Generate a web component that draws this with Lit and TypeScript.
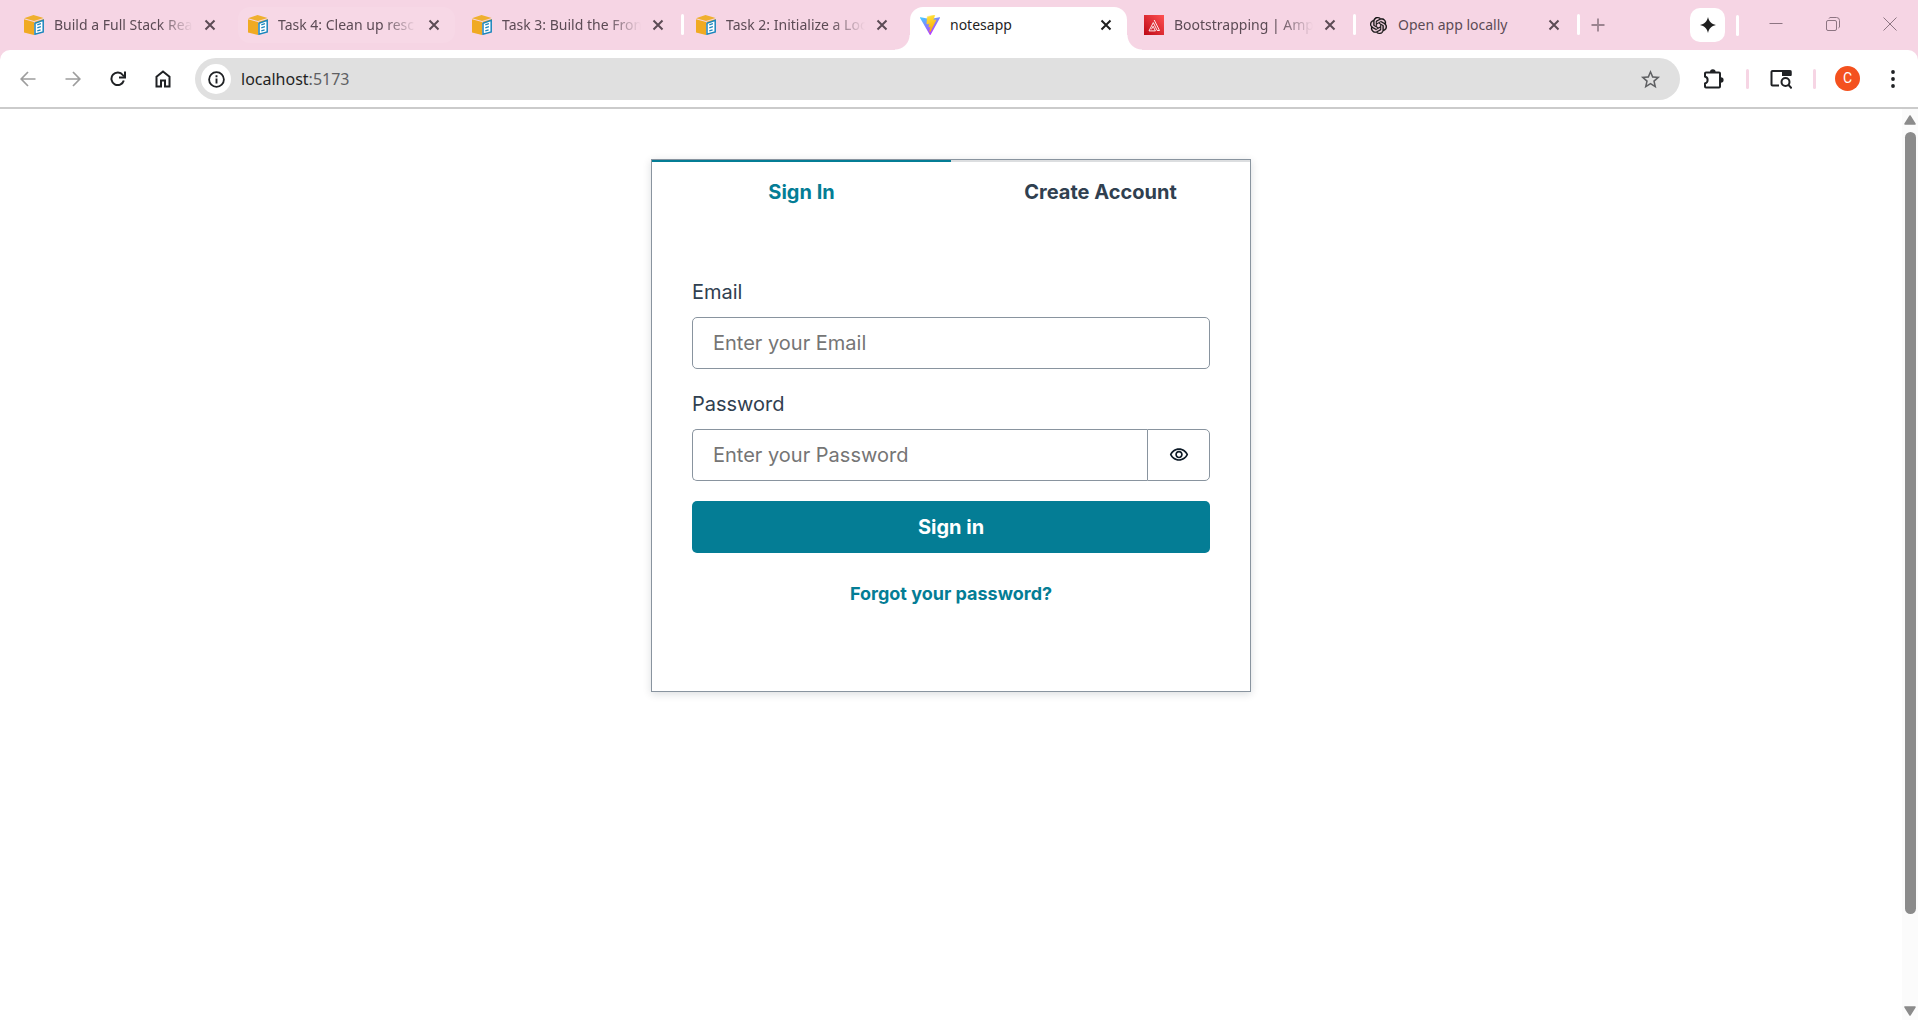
import { LitElement, html, css, svg } from "lit";
import { customElement, property, state } from "lit/decorators.js";
import { classMap } from "lit/directives/class-map.js";

const bookIcon = svg`<svg viewBox="0 0 20 20" width="20" height="20" aria-hidden="true">
  <path d="M0 3.2 9.500 0 19.600 3 10 6z" fill="#efb02f"/>
  <path d="M0 4.200 10 7v13L0 17.600z" fill="#f0aa22"/>
  <path d="M10.600 6.800 20 3.900v3L10.600 10z" fill="#efb02f"/>
  <path d="M11 8.200 19.200 5.400v11.600L11 19.200z" fill="#fff" stroke="#1c86bd" stroke-width="1.500"/>
  <path d="M13.300 9.900l3.600-1.200M13.300 12.800l3.600-1.100M13.300 15.900l3.300-1" stroke="#1c86bd" stroke-width="1.300" fill="none"/>
</svg>`;

const viteIcon = svg`<svg viewBox="0 0 32 32" width="20" height="20" aria-hidden="true">
  <defs>
    <linearGradient id="va" x1="0" y1="0" x2="0.6" y2="1"><stop offset="0" stop-color="#41d1ff"/><stop offset="1" stop-color="#bd34fe"/></linearGradient>
    <linearGradient id="vb" x1="0.4" y1="0" x2="0.6" y2="1"><stop offset="0" stop-color="#ffea83"/><stop offset="0.1" stop-color="#ffdd35"/><stop offset="1" stop-color="#ffa800"/></linearGradient>
  </defs>
  <path fill="url(#va)" d="M31.9 4.7 17 31.4a.8.8 0 0 1-1.4 0L.1 4.7A.8.8 0 0 1 1 3.500l15 2.700h.3l14.700-2.700a.8.8 0 0 1 .9 1.200z"/>
  <path fill="url(#vb)" stroke="url(#vb)" stroke-width="0.800" d="M23 .1 11.900 2.300a.4.4 0 0 0-.3.400l-.7 11.400a.4.4 0 0 0 .5.400l3.100-.7a.4.4 0 0 1 .5.500l-.9 4.500a.4.4 0 0 0 .5.500l1.900-.6a.4.4 0 0 1 .5.500l-1.500 7.100c-.1.400.5.700.8.300l.2-.3 9.100-18.100a.4.4 0 0 0-.5-.6l-3.200.6a.4.4 0 0 1-.5-.5L23.500.6A.4.4 0 0 0 23 .1z"/>
</svg>`;

const amplifyIcon = svg`<svg viewBox="0 0 20 20" width="20" height="20" aria-hidden="true">
  <defs><linearGradient id="am" x1="0" y1="1" x2="1" y2="0"><stop offset="0" stop-color="#bd0816"/><stop offset="1" stop-color="#ff5252"/></linearGradient></defs>
  <path fill="url(#am)" d="M0 0h20v20H0z"/>
  <path d="M10.200 5 15.500 15.500H13.200L9.300 7.600 5 15.900H11.400L9.100 11.200 7.400 14.400" fill="none" stroke="#fff" stroke-width="0.900"/>
</svg>`;

const knotIcon = svg`<svg viewBox="0 0 24 24" width="17" height="17" aria-hidden="true"><path fill="#111" stroke="#111" stroke-width="0.400" d="M22.2819 9.8211a5.9847 5.9847 0 0 0-.5157-4.9108 6.0462 6.0462 0 0 0-6.5098-2.9A6.0651 6.0651 0 0 0 4.9807 4.1818a5.9847 5.9847 0 0 0-3.9977 2.9 6.0462 6.0462 0 0 0 .7427 7.0966 5.98 5.98 0 0 0 .511 4.9107 6.051 6.051 0 0 0 6.5146 2.9001A5.9847 5.9847 0 0 0 13.2599 24a6.0557 6.0557 0 0 0 5.7718-4.2058 5.9894 5.9894 0 0 0 3.9977-2.9001 6.0557 6.0557 0 0 0-.7475-7.0729zm-9.022 12.6081a4.4755 4.4755 0 0 1-2.8764-1.0408l.1419-.0804 4.7783-2.7582a.7948.7948 0 0 0 .3927-.6813v-6.7369l2.02 1.1686a.071.071 0 0 1 .038.052v5.5826a4.504 4.504 0 0 1-4.4945 4.4944zm-9.6607-4.1254a4.4708 4.4708 0 0 1-.5346-3.0137l.142.0852 4.783 2.7582a.7712.7712 0 0 0 .7806 0l5.8428-3.3685v2.3324a.0804.0804 0 0 1-.0332.0615L9.74 19.9502a4.4992 4.4992 0 0 1-6.1408-1.6464zM2.3408 7.8956a4.485 4.485 0 0 1 2.3655-1.9728V11.6a.7664.7664 0 0 0 .3879.6765l5.8144 3.3543-2.0201 1.1685a.0757.0757 0 0 1-.071 0l-4.8303-2.7865A4.504 4.504 0 0 1 2.3408 7.872zm16.5963 3.8558L13.1038 8.364 15.1192 7.2a.0757.0757 0 0 1 .071 0l4.8303 2.7913a4.4944 4.4944 0 0 1-.6765 8.1042v-5.6772a.79.79 0 0 0-.407-.667zm2.0107-3.0231l-.142-.0852-4.7735-2.7818a.7759.7759 0 0 0-.7854 0L9.409 9.2297V6.8974a.0662.0662 0 0 1 .0284-.0615l4.8303-2.7866a4.4992 4.4992 0 0 1 6.6802 4.66zM8.3065 12.863l-2.02-1.1638a.0804.0804 0 0 1-.038-.0567V6.0742a4.4992 4.4992 0 0 1 7.3757-3.4537l-.142.0805L8.704 5.459a.7948.7948 0 0 0-.3927.6813zm1.0976-2.3654l2.602-1.4998 2.6069 1.4998v2.9994l-2.5974 1.4997-2.6067-1.4997Z"/></svg>`;

const closeIcon = svg`<svg viewBox="0 0 12 12" width="12" height="12" aria-hidden="true"><path d="M1.500 1.500l9 9M10.500 1.500l-9 9" stroke="currentColor" stroke-width="2" fill="none"/></svg>`;

interface TabInfo {
  title: string;
  icon: unknown;
  divider?: boolean;
  active?: boolean;
  lit?: boolean;
}

const TABS: TabInfo[] = [
  { title: "Build a Full Stack Rea", icon: bookIcon },
  { title: "Task 4: Clean up resc", icon: bookIcon, lit: true },
  { title: "Task 3: Build the Fron", icon: bookIcon, divider: true },
  { title: "Task 2: Initialize a Loc", icon: bookIcon },
  { title: "notesapp", icon: viteIcon, active: true },
  { title: "Bootstrapping | Amp", icon: amplifyIcon, divider: true },
  { title: "Open app locally", icon: knotIcon, divider: true },
];

@customElement("tab-strip")
export class TabStrip extends LitElement {
  static styles = css`
    :host {
      display: flex;
      height: 50px;
      background: #f6d5e4;
      color: #5c4b55;
      font: 14px/20px "Noto Sans", "Open Sans", sans-serif;
    }
    button {
      display: grid;
      place-items: center;
      padding: 0;
      border: 0;
      background: none;
      color: inherit;
      font: inherit;
    }
    svg { display: block; }
    .tabs { display: flex; padding-left: 14px; }
    .cell { display: flex; padding-top: 7px; }
    .tab {
      display: flex;
      align-items: center;
      box-sizing: border-box;
      width: 217px;
      height: 36px;
      padding: 0 14px 0 10px;
      border-radius: 12px;
    }
    .lit { background: #f7d8e6; }
    .active {
      position: relative;
      height: 43px;
      padding-bottom: 7px;
      border-radius: 13px 13px 0 0;
      background: #fff;
      color: #1f1f1f;
    }
    .active::before,
    .active::after {
      content: "";
      position: absolute;
      bottom: 0;
      width: 15px;
      height: 15px;
    }
    .active::before { right: 100%; background: radial-gradient(circle at 0 0, transparent 14px, #fff 15px); }
    .active::after { left: 100%; background: radial-gradient(circle at 100% 0, transparent 14px, #fff 15px); }
    .icon { display: grid; place-items: center; width: 20px; }
    .title {
      flex: 1;
      min-width: 0;
      margin: 0 10px;
      white-space: nowrap;
      mask-image: linear-gradient(to right, #000 calc(100% - 34px), transparent);
    }
    .whole { mask-image: none; }
    .close { width: 14px; height: 20px; }
    .gap { display: grid; justify-items: center; width: 7px; padding-top: 7px; }
    .bar { width: 3px; height: 21px; border-radius: 2px; background: #fff; }
    .new { width: 30px; height: 50px; margin-left: 1px; color: #9b8490; }
    .spacer { flex: 1; }
    .spark {
      width: 35px;
      height: 34px;
      margin: 8px 11px 0 0;
      border-radius: 10px;
      background: #fff;
      color: #1f1f1f;
    }
    .edge { margin-top: 15px; }
    .window { display: flex; height: 48px; padding-left: 8px; color: #8d7582; }
    .window button { width: 57px; }
  `;

  render() {
    return html`
      <div class="tabs" role="tablist">
        ${TABS.map(
          (t) => html`<div class="cell">
            <div class=${classMap({ tab: true, active: !!t.active, lit: !!t.lit })} role="tab" aria-selected=${t.active ? "true" : "false"}>
              <span class="icon">${t.icon}</span>
              <span class=${classMap({ title: true, whole: t.title.length < 17 })}>${t.title}</span>
              <button class="close" aria-label="Close tab">${closeIcon}</button>
            </div>
            <div class="gap">${t.divider ? html`<span class="bar"></span>` : ""}</div>
          </div>`
        )}
      </div>
      <button class="new" aria-label="New tab">
        <svg viewBox="0 0 14 14" width="14" height="14"><path d="M7 .5v13M.5 7h13" stroke="currentColor" stroke-width="1.800"/></svg>
      </button>
      <div class="spacer"></div>
      <button class="spark" aria-label="Assistant">
        <svg viewBox="0 0 16 16" width="16" height="16"><path fill="currentColor" d="M8 0c.9 4.500 3.500 7.100 8 8-4.500.9-7.100 3.500-8 8-.9-4.500-3.500-7.100-8-8 4.500-.9 7.100-3.500 8-8z"/></svg>
      </button>
      <span class="bar edge"></span>
      <div class="window">
        <button aria-label="Minimize"><svg viewBox="0 0 14 14" width="14" height="14"><path d="M.5 6.500h13" stroke="currentColor"/></svg></button>
        <button aria-label="Restore"><svg viewBox="0 0 14 14" width="14" height="14" fill="none" stroke="currentColor"><rect x=".5" y="3.500" width="10" height="10" rx="1.500"/><path d="M3 1.500a2 2 0 0 1 1-1h6.500a3 3 0 0 1 3 3V10a2 2 0 0 1-1 1"/></svg></button>
        <button aria-label="Close"><svg viewBox="0 0 14 14" width="14" height="14"><path d="M.5.5l13 13M13.500.5l-13 13" stroke="currentColor"/></svg></button>
      </div>
    `;
  }
}

@customElement("address-bar")
export class AddressBar extends LitElement {
  @property() host = "localhost";
  @property() port = ":5173";

  static styles = css`
    :host { display: block; background: #f6d5e4; }
    .bar {
      display: flex;
      align-items: center;
      height: 57px;
      padding: 0 3px 0 5px;
      border-bottom: 2px solid #cbcbcb;
      border-radius: 10px 10px 0 0;
      background: #fff;
    }
    button {
      display: grid;
      place-items: center;
      width: 45px;
      height: 40px;
      padding: 0;
      border: 0;
      background: none;
      color: #1f2124;
    }
    .dim { color: #9d9d9d; }
    .omnibox {
      display: flex;
      flex: 1;
      align-items: center;
      height: 42px;
      margin: 1px 11px 0 10px;
      padding-left: 6px;
      border-radius: 21px;
      background: #e0e0e0;
      font: 16px/24px "Noto Sans", "Open Sans", sans-serif;
      color: #1f1f1f;
    }
    .info { width: 30px; height: 30px; border-radius: 50%; background: #fff; }
    .url { flex: 1; margin-left: 10px; }
    .port { color: #5f6063; }
    .star { width: 59px; color: #5f6063; }
    .line { width: 3px; height: 20px; margin: 0 9px 0 10px; border-radius: 2px; background: #f6d5e4; }
    .avatar {
      display: grid;
      place-items: center;
      width: 25px;
      height: 25px;
      border-radius: 50%;
      background: #f4511e;
      color: #fff;
      font: 14px/25px Roboto, sans-serif;
    }
  `;

  render() {
    return html`<div class="bar">
      <button class="dim" aria-label="Back"><svg viewBox="0 0 16 16" width="16" height="16" fill="none" stroke="currentColor" stroke-width="1.700"><path d="M15.500 8H1.500M8 1L1.200 8 8 15"/></svg></button>
      <button class="dim" aria-label="Forward"><svg viewBox="0 0 16 16" width="16" height="16" fill="none" stroke="currentColor" stroke-width="1.700"><path d="M.5 8h14M8 1l6.800 7L8 15"/></svg></button>
      <button aria-label="Reload"><svg viewBox="0 0 16 16" width="16" height="16" fill="none" stroke="currentColor" stroke-width="2"><path d="M13.800 9.500A6.300 6.300 0 1 1 12.800 4L14 5.500"/><path d="M15 .5V6.500H9"/></svg></button>
      <button aria-label="Home"><svg viewBox="0 0 16 18" width="16" height="18" fill="none" stroke="currentColor" stroke-width="2"><path d="M1.500 6.800 8 1.500l6.500 5.300V16.500H10V10.500H6V16.500H1.500z"/></svg></button>
      <div class="omnibox">
        <button class="info" aria-label="Site information"><svg viewBox="0 0 17 17" width="17" height="17"><circle cx="8.500" cy="8.500" r="7.400" fill="none" stroke="currentColor" stroke-width="1.800"/><path d="M8.500 7.500v5M8.500 4.200v2" stroke="currentColor" stroke-width="1.900"/></svg></button>
        <span class="url">${this.host}<span class="port">${this.port}</span></span>
        <button class="star" aria-label="Bookmark"><svg viewBox="0 0 24 24" width="23" height="23"><path fill="currentColor" d="M22 9.240l-7.190-.62L12 2 9.190 8.630 2 9.240l5.460 4.730L5.820 21 12 17.270 18.180 21l-1.630-7.030L22 9.240zM12 15.400l-3.760 2.270 1-4.280-3.320-2.880 4.380-.38L12 6.100l1.710 4.040 4.380.38-3.320 2.880 1 4.280L12 15.400z"/></svg></button>
      </div>
      <button aria-label="Extensions"><svg viewBox="0 0 22 22" width="22" height="22"><path d="M3 4.500H16a1 1 0 0 1 1 1V18.500a1 1 0 0 1-1 1H3a1 1 0 0 1-1-1V15.500C5.500 14.500 5.500 9.500 2 8.500V5.500a1 1 0 0 1 1-1z" fill="none" stroke="currentColor" stroke-width="2"/><path d="M7 4a2.800 2.800 0 0 1 5.600 0zM17.800 9.200a2.800 2.800 0 0 1 0 5.600z" fill="currentColor"/></svg></button>
      <span class="line"></span>
      <button aria-label="Search tabs"><svg viewBox="0 0 22 20" width="22" height="20"><path d="M9 16.500H2.500a1 1 0 0 1-1-1V3a1 1 0 0 1 1-1h17a1 1 0 0 1 1 1V6" fill="none" stroke="currentColor" stroke-width="2"/><path d="M12 1.500h9.500V7H12z" fill="currentColor"/><circle cx="15.500" cy="13" r="4" fill="#fff" stroke="currentColor" stroke-width="2"/><path d="M18.300 15.800l3.400 3.600" stroke="currentColor" stroke-width="2"/></svg></button>
      <span class="line"></span>
      <button aria-label="Profile"><span class="avatar">C</span></button>
      <button aria-label="Menu"><svg viewBox="0 0 4 18" width="4" height="18" fill="currentColor"><circle cx="2" cy="2" r="1.900"/><circle cx="2" cy="9" r="1.900"/><circle cx="2" cy="16" r="1.900"/></svg></button>
    </div>`;
  }
}

@customElement("sign-in-card")
export class SignInCard extends LitElement {
  @state() private reveal = false;

  static styles = css`
    :host {
      display: block;
      box-sizing: border-box;
      width: 600px;
      max-width: 100%;
      border: 1px solid #89949f;
      background: #fff;
      box-shadow: 0 2px 8px rgba(13, 26, 38, 0.15);
      color: #304050;
      font: 20px/30px Inter, sans-serif;
    }
    button, input {
      box-sizing: border-box;
      margin: 0;
      font: inherit;
      color: inherit;
      background: none;
      border: 0;
    }
    .tabs { display: flex; }
    .tab {
      flex: 1;
      padding: 15px 20px;
      border-top: 2px solid #dcdee0;
      font-weight: 700;
    }
    .current { border-color: #047d95; color: #047d95; }
    form {
      display: flex;
      flex-direction: column;
      gap: 20px;
      padding: 55px 40px 76px;
    }
    .field { display: flex; flex-direction: column; gap: 10px; }
    .row { display: flex; }
    .input {
      flex: 1;
      min-width: 0;
      height: 52px;
      padding: 0 20px;
      border: 1px solid #89949f;
      border-radius: 5px;
    }
    .input::placeholder { color: #757575; opacity: 1; }
    .joined { border-right: 0; border-radius: 5px 0 0 5px; }
    .show {
      display: grid;
      place-items: center;
      width: 63px;
      height: 52px;
      padding: 0;
      border: 1px solid #89949f;
      border-radius: 0 5px 5px 0;
      color: #0d1a26;
    }
    .submit {
      height: 52px;
      border-radius: 5px;
      background: #047d95;
      color: #fff;
      font-weight: 700;
    }
    .forgot {
      align-self: center;
      height: 42px;
      padding: 0 15px;
      color: #047d95;
      font-size: 18px;
      font-weight: 700;
    }
  `;

  render() {
    return html`
      <div class="tabs" role="tablist">
        <button class="tab current" role="tab" aria-selected="true">Sign In</button>
        <button class="tab" role="tab" aria-selected="false">Create Account</button>
      </div>
      <form @submit=${(e: Event) => e.preventDefault()}>
        <div class="field">
          <label for="email">Email</label>
          <div class="row"><input class="input" id="email" type="email" placeholder="Enter your Email" /></div>
        </div>
        <div class="field">
          <label for="password">Password</label>
          <div class="row">
            <input class="input joined" id="password" type=${this.reveal ? "text" : "password"} placeholder="Enter your Password" />
            <button class="show" type="button" aria-label="Show password" @click=${() => (this.reveal = !this.reveal)}>
              <svg viewBox="0 0 24 24" width="20" height="20"><path fill="currentColor" fill-rule="evenodd" d="M12 6C15.790 6 19.170 8.130 20.820 11.500C19.170 14.870 15.790 17 12 17C8.210 17 4.830 14.870 3.180 11.500C4.830 8.130 8.210 6 12 6ZM12 4C7 4 2.730 7.110 1 11.500C2.730 15.890 7 19 12 19C17 19 21.270 15.890 23 11.500C21.270 7.110 17 4 12 4ZM12 9C13.380 9 14.500 10.120 14.500 11.500C14.500 12.880 13.380 14 12 14C10.620 14 9.500 12.880 9.500 11.500C9.500 10.120 10.620 9 12 9ZM12 7C9.520 7 7.500 9.020 7.500 11.500C7.500 13.980 9.520 16 12 16C14.480 16 16.500 13.980 16.500 11.500C16.500 9.020 14.480 7 12 7Z"/></svg>
            </button>
          </div>
        </div>
        <button class="submit" type="submit">Sign in</button>
        <button class="forgot" type="button">Forgot your password?</button>
      </form>
    `;
  }
}

@customElement("app-root")
export class AppRoot extends LitElement {
  static styles = css`
    :host {
      display: flex;
      flex-direction: column;
      min-height: 100vh;
      background: #fff;
    }
    .page { display: flex; flex: 1; }
    main { display: flex; flex: 1; justify-content: center; align-items: flex-start; padding: 50px 0; }
    .scroll {
      display: flex;
      flex-direction: column;
      align-items: center;
      box-sizing: border-box;
      width: 16px;
      padding: 6px 0 4px;
      background: #fbfbfb;
    }
    .scroll svg { display: block; }
    .track { flex: 1; width: 11px; padding: 7px 0 5px; }
    .thumb { height: 90%; border-radius: 6px; background: #8b8b8b; }
  `;

  render() {
    return html`
      <tab-strip></tab-strip>
      <address-bar></address-bar>
      <div class="page">
        <main><sign-in-card></sign-in-card></main>
        <div class="scroll" aria-hidden="true">
          <svg viewBox="0 0 12 10" width="12" height="10"><path d="M6 1l5 8H1z" fill="#8b8b8b" stroke="#8b8b8b" stroke-width="1.500" stroke-linejoin="round"/></svg>
          <div class="track"><div class="thumb"></div></div>
          <svg viewBox="0 0 12 10" width="12" height="10"><path d="M6 9L1 1h10z" fill="#8b8b8b" stroke="#8b8b8b" stroke-width="1.500" stroke-linejoin="round"/></svg>
        </div>
      </div>
    `;
  }
}
